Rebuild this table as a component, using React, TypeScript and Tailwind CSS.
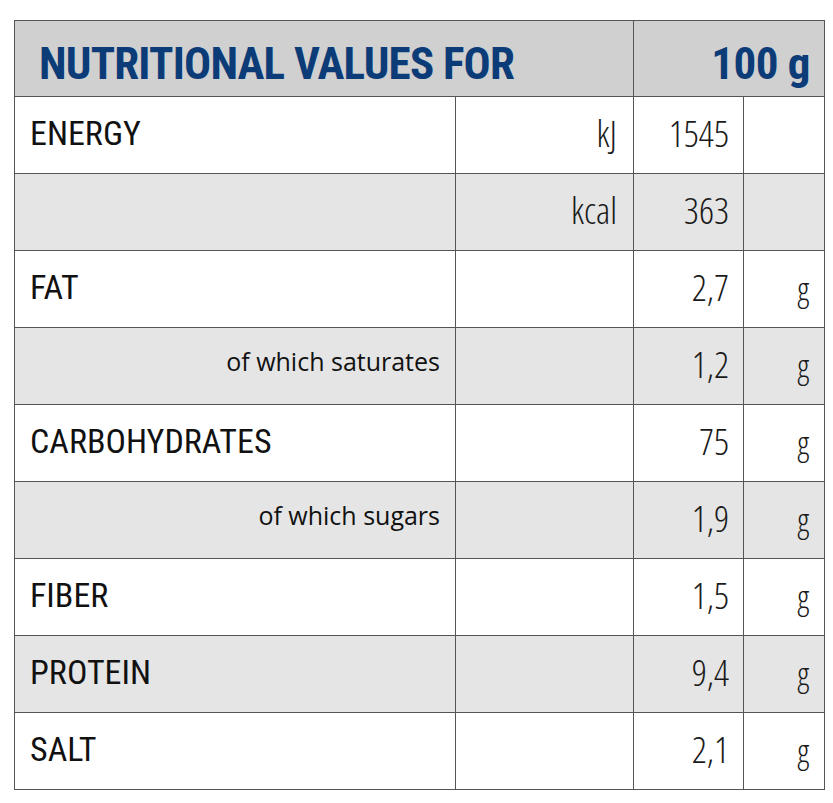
const rows = [
  { label: "ENERGY", unit: "kJ", value: "1545", suffix: "", sub: false },
  { label: "", unit: "kcal", value: "363", suffix: "", sub: false },
  { label: "FAT", unit: "", value: "2,7", suffix: "g", sub: false },
  { label: "of which saturates", unit: "", value: "1,2", suffix: "g", sub: true },
  { label: "CARBOHYDRATES", unit: "", value: "75", suffix: "g", sub: false },
  { label: "of which sugars", unit: "", value: "1,9", suffix: "g", sub: true },
  { label: "FIBER", unit: "", value: "1,5", suffix: "g", sub: false },
  { label: "PROTEIN", unit: "", value: "9,4", suffix: "g", sub: false },
  { label: "SALT", unit: "", value: "2,1", suffix: "g", sub: false },
];

const cell = "border border-[#555] align-middle p-0";
const thin = "font-['Open_Sans',sans-serif] font-light font-stretch-condensed leading-none text-[#1a1a1a]";

export default function App() {
  return (
    <div className="w-[833px] h-[803px] bg-white pt-[20px] pl-[14px]">
      <table className="border-collapse table-fixed w-[810px]">
        <colgroup>
          <col className="w-[441px]" />
          <col className="w-[178px]" />
          <col className="w-[110px]" />
          <col className="w-[81px]" />
        </colgroup>
        <thead>
          <tr className="h-[76px] bg-[#d0d0d0]">
            <th
              colSpan={2}
              className={`${cell} pl-[24px] pt-[10px] text-left font-['Roboto_Condensed',sans-serif] text-[45px] leading-none font-bold tracking-[-0.8px] text-[#0c3c78]`}
            >
              NUTRITIONAL VALUES FOR
            </th>
            <th
              colSpan={2}
              className={`${cell} pr-[14px] pt-[10px] text-right font-['Roboto_Condensed',sans-serif] text-[45px] leading-none font-bold tracking-[-0.5px] text-[#0c3c78]`}
            >
              100 g
            </th>
          </tr>
        </thead>
        <tbody>
          {rows.map((r, i) => (
            <tr key={i} className={`h-[77px] ${i % 2 === 1 ? "bg-[#e5e5e5]" : "bg-white"}`}>
              <td
                className={`${cell} ${
                  r.sub
                    ? "pr-[15px] pb-[10px] text-right font-['Open_Sans',sans-serif] text-[25px] leading-none font-normal text-[#111]"
                    : "pl-[15px] pb-[4px] text-left font-['Roboto_Condensed',sans-serif] text-[34px] leading-none font-normal text-[#111]"
                }`}
              >
                {r.label}
              </td>
              <td className={`${cell} ${thin} text-[37px] pr-[16px] pb-[6px] text-right`}>{r.unit}</td>
              <td className={`${cell} ${thin} text-[37px] pr-[14px] pb-[6px] text-right`}>{r.value}</td>
              <td className={`${cell} ${thin} text-[33px] pr-[15px] pb-[2px] text-right`}>{r.suffix}</td>
            </tr>
          ))}
        </tbody>
      </table>
    </div>
  );
}
